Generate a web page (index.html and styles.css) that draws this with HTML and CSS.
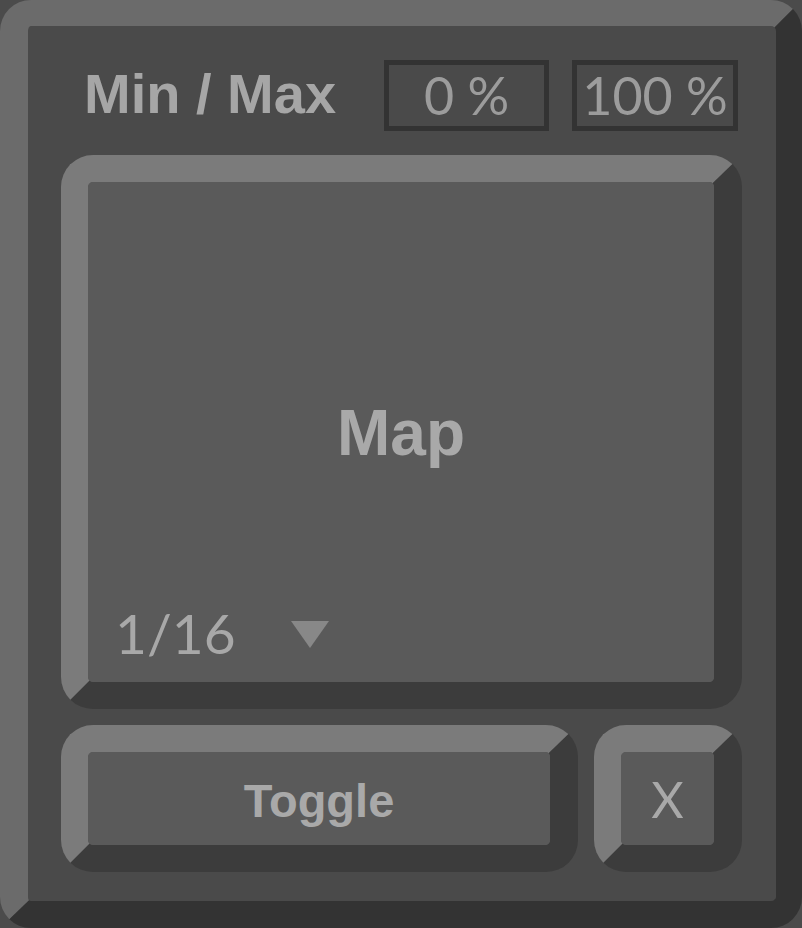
FILE: index.html
```html
<!DOCTYPE html>
<html>
<head>
<meta charset="utf-8">
<link rel="stylesheet" href="styles.css">
</head>
<body>
<div class="panel">
  <div class="header">
    <div class="title">Min / Max</div>
    <div class="numbox">0 %</div>
    <div class="numbox">100 %</div>
  </div>
  <div class="btn map">
    <div class="face map-face">
      <div class="spacer"></div>
      <div class="map-label">Map</div>
      <div class="map-foot">
        <span class="rate">1/16</span>
        <svg class="tri" width="38" height="27" viewBox="0 0 38 27"><polygon points="0,0 38,0 19,27" fill="#888888"/></svg>
      </div>
    </div>
  </div>
  <div class="bottom">
    <div class="btn toggle"><div class="face label">Toggle</div></div>
    <div class="btn xbtn"><div class="face xlabel">X</div></div>
  </div>
</div>
</body>
</html>
```

FILE: styles.css
```css
html, body {
  margin: 0;
  padding: 0;
  background: #4b4b4b;
}
.panel {
  box-sizing: border-box;
  width: 802px;
  height: 928px;
  background: #4a4a4a;
  border-style: solid;
  border-width: 26px 26px 27px 28px;
  border-color: #6b6b6b #333333 #333333 #6b6b6b;
  border-radius: 31px;
  padding: 34px 34px 29px 33px;
  display: flex;
  flex-direction: column;
}
.header {
  height: 71px;
  display: flex;
  align-items: center;
  padding: 0 4px 0 23px;
  gap: 23px;
}
.title {
  flex: 1;
  font-family: "Liberation Sans", Arial, sans-serif;
  font-weight: bold;
  font-size: 56px;
  color: #a6a6a6;
  white-space: nowrap;
  padding-bottom: 5px;
}
.title + .numbox {
  width: 165px;
}
.numbox {
  box-sizing: border-box;
  width: 166px;
  height: 71px;
  border: 5px solid #333333;
  display: flex;
  align-items: center;
  justify-content: center;
  font-family: Lato, "Noto Sans", sans-serif;
  font-size: 52px;
  color: #9c9c9c;
  white-space: nowrap;
  padding-bottom: 2px;
}
.btn {
  box-sizing: border-box;
  border-style: solid;
  border-width: 27px 28px 27px 27px;
  border-color: #7b7b7b #3c3c3c #3c3c3c #7b7b7b;
  border-radius: 32px;
  background: #5a5a5a;
}
.face {
  background: #5a5a5a;
  border-radius: 5px;
  height: 100%;
}
.map {
  margin-top: 24px;
  height: 554px;
}
.map-face {
  display: grid;
  grid-template-rows: 1fr auto 1fr;
  justify-items: center;
}
.map-label {
  font-family: "Liberation Sans", Arial, sans-serif;
  font-weight: bold;
  font-size: 64px;
  color: #a9a9a9;
  line-height: 1;
  padding-top: 2px;
}
.map-foot {
  align-self: end;
  justify-self: start;
  display: flex;
  align-items: center;
  padding: 0 0 16px 27px;
}
.rate {
  font-family: Lato, "Noto Sans", sans-serif;
  font-size: 55px;
  line-height: 1.2;
  color: #a8a8a8;
}
.tri {
  margin-left: 55px;
  margin-top: 3px;
}
.bottom {
  margin-top: 16px;
  height: 147px;
  display: flex;
  gap: 16px;
}
.toggle {
  width: 517px;
  height: 147px;
}
.xbtn {
  width: 148px;
  height: 147px;
}
.label, .xlabel {
  display: flex;
  align-items: center;
  justify-content: center;
  color: #a9a9a9;
}
.label {
  font-family: "Liberation Sans", Arial, sans-serif;
  font-weight: bold;
  font-size: 47px;
  padding-top: 3px;
  box-sizing: border-box;
}
.xlabel {
  font-family: Lato, "Noto Sans", sans-serif;
  font-size: 50px;
}
```
